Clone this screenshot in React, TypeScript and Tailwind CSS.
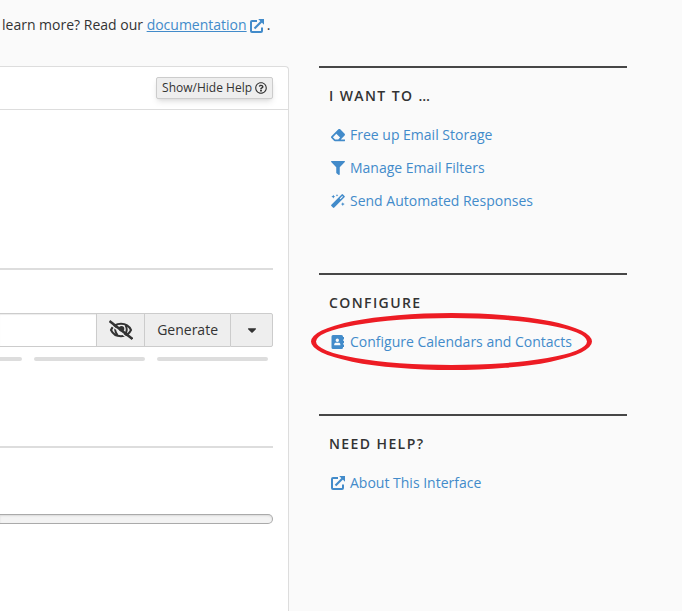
import type { ReactNode } from "react";
import type { IconType } from "react-icons";
import { FaCaretDown, FaEraser, FaFilter, FaRegQuestionCircle } from "react-icons/fa";

type IconProps = { className?: string };

function ExternalIcon({ className }: IconProps) {
  return (
    <svg viewBox="0 0 14 14" className={className} fill="none" stroke="currentColor" aria-hidden="true">
      <path d="M7 2H2q-1 0-1 1v9q0 1 1 1h9q1 0 1-1V8.500" strokeWidth="2" />
      <path d="M4.500 9.500 11.500 2.500" strokeWidth="2.200" />
      <path d="M8.200 0H14v5.800z" fill="currentColor" stroke="none" />
    </svg>
  );
}

function WandIcon({ className }: IconProps) {
  return (
    <svg viewBox="0 0 14 14" className={className} fill="currentColor" aria-hidden="true">
      <path
        fillRule="evenodd"
        d="M10.600.4q.7-.6 1.400 0l1.500 1.500q.7.7 0 1.400L3.300 13.600q-.7.6-1.400 0L.4 12.100q-.6-.7 0-1.400zM11.200 2 8.700 4.500l.7.8L12 2.800z"
      />
      <path d="m2.300.8.6 1.300 1.300.6-1.300.6-.6 1.300-.6-1.300L.4 2.700l1.300-.6z" />
      <path d="m6 0 .4.900.9.400-.9.400L6 2.600l-.4-.9-.9-.4.900-.4z" />
      <path d="m11.800 8.200.6 1.300 1.300.6-1.300.6-.6 1.300-.6-1.300-1.300-.6 1.300-.6z" />
    </svg>
  );
}

function AddressBookIcon({ className }: IconProps) {
  return (
    <svg viewBox="0 0 14 14" className={className} fill="currentColor" aria-hidden="true">
      <path
        fillRule="evenodd"
        d="M2 0h8.500Q12 0 12 1.500v11q0 1.500-1.500 1.500H2Q.5 14 .5 12.500v-11Q.5 0 2 0zm4.300 3.500a1.700 1.700 0 1 0 0 3.400 1.700 1.700 0 0 0 0-3.400zM3.200 10.300h6.200V9.400c0-1-.8-1.700-1.900-1.700H5.100c-1.100 0-1.900.7-1.900 1.700z"
      />
      <path d="M11.500 2H13v2.500h-1.500zM11.500 5.700H13v2.500h-1.500zM11.500 9.400H13v2.500h-1.500z" />
    </svg>
  );
}

function EyeOffIcon({ className }: IconProps) {
  return (
    <svg viewBox="0 0 24 20" className={className} fill="none" stroke="currentColor" aria-hidden="true">
      <path d="M2 10C4 5.600 8 3.800 12 3.800S20 5.600 22 10c-2 4.400-6 6.200-10 6.200S4 14.400 2 10z" strokeWidth="2" />
      <path d="M7.500 5C5.800 8 5.800 12 8.500 15.200M16.500 5c1.700 3 1.700 7-1 10.200" strokeWidth="2" />
      <circle cx="12.500" cy="8.800" r="2.800" fill="currentColor" stroke="none" />
      <path d="M-.5 3 21 20" stroke="#eee" strokeWidth="1.500" />
      <path d="M.5 1 23.500 19" strokeWidth="2.400" />
    </svg>
  );
}

type SectionProps = { title: string; children: ReactNode };

function SideSection({ title, children }: SectionProps) {
  return (
    <section className="border-t-2 border-[#474747] pt-[18px] pb-14">
      <h2 className="px-[10px] text-sm leading-5 font-semibold tracking-widest uppercase">{title}</h2>
      <ul className="mt-3 pl-3">{children}</ul>
    </section>
  );
}

type SideLinkProps = {
  icon: IconType | ((props: IconProps) => ReactNode);
  label: string;
  circled?: boolean;
};

function SideLink({ icon: Icon, label, circled }: SideLinkProps) {
  return (
    <li className="flex">
      <a href="#" className="relative flex items-center gap-[5px] py-[6px] leading-[21px] text-[#428bca]">
        <Icon className="size-[14px] shrink-0" />
        {label}
        {circled && (
          <span className="pointer-events-none absolute -inset-x-5 -inset-y-3 rounded-[50%] border-[5px] border-[#ed1c24]" />
        )}
      </a>
    </li>
  );
}

export default function App() {
  return (
    <div className="min-h-screen bg-[#fafafa] font-['Open_Sans',sans-serif] text-sm text-[#333]">
      <p className="flex items-center pt-[15px] pl-[2px] leading-5 whitespace-pre">
        learn more? Read our{" "}
        <a href="#" className="flex items-center gap-[3px] text-[#428bca]">
          <span className="underline">documentation</span>
          <ExternalIcon className="mt-[2px] size-[14px]" />
        </a>
        <span className="pl-[3px]">.</span>
      </p>

      <div className="mt-[31px] grid min-h-[545px] grid-cols-[minmax(0,1fr)_308px] gap-[30px] pr-[55px]">
        <main className="rounded-tr border-t border-r border-[#ddd] bg-white">
          <div className="flex justify-end border-b border-[#ddd] pt-[10px] pr-[15px] pb-[10px]">
            <button
              type="button"
              className="flex h-[22px] items-center gap-[3px] rounded-xs border border-[#ccc] bg-[#eee] px-[5px] text-xs shadow-md"
            >
              Show/Hide Help
              <FaRegQuestionCircle className="size-3" />
            </button>
          </div>

          <div className="pr-[15px]">
            <hr className="mt-[158px] border-t-2 border-[#ddd]" />

            <div className="mt-[43px] flex h-[34px]">
              <input
                type="password"
                aria-label="Password"
                className="min-w-0 flex-1 border-y border-[#ccc] bg-white px-3 shadow-[inset_0_1px_1px_rgba(0,0,0,0.075)] outline-none"
              />
              <button
                type="button"
                aria-label="Show password"
                className="flex w-[49px] items-center justify-center border border-[#ccc] bg-[#eee]"
              >
                <EyeOffIcon className="h-5 w-6" />
              </button>
              <button type="button" className="border-y border-[#ccc] bg-[#eee] px-3">
                Generate
              </button>
              <button
                type="button"
                aria-label="Generate options"
                className="flex w-[43px] items-center justify-center rounded-r-xs border border-[#ccc] bg-[#eee]"
              >
                <FaCaretDown className="size-[14px]" />
              </button>
            </div>

            <div className="mt-[10px] flex gap-3 pr-[5px]">
              <span className="h-1 flex-1 rounded-r-full bg-[#ddd]" />
              <span className="h-1 w-[111px] rounded-full bg-[#ddd]" />
              <span className="h-1 w-[111px] rounded-full bg-[#ddd]" />
            </div>

            <hr className="mt-[85px] border-t-2 border-[#ddd]" />

            <div className="mt-[66px] h-[10px] rounded-r-[5px] border border-l-0 border-[#aaa] bg-[#f3f3f3] shadow-[inset_0_1px_2px_rgba(0,0,0,0.1)]" />
          </div>
        </main>

        <aside>
          <SideSection title="I want to …">
            <SideLink icon={FaEraser} label="Free up Email Storage" />
            <SideLink icon={FaFilter} label="Manage Email Filters" />
            <SideLink icon={WandIcon} label="Send Automated Responses" />
          </SideSection>
          <SideSection title="Configure">
            <SideLink icon={AddressBookIcon} label="Configure Calendars and Contacts" circled />
          </SideSection>
          <SideSection title="Need help?">
            <SideLink icon={ExternalIcon} label="About This Interface" />
          </SideSection>
        </aside>
      </div>
    </div>
  );
}
